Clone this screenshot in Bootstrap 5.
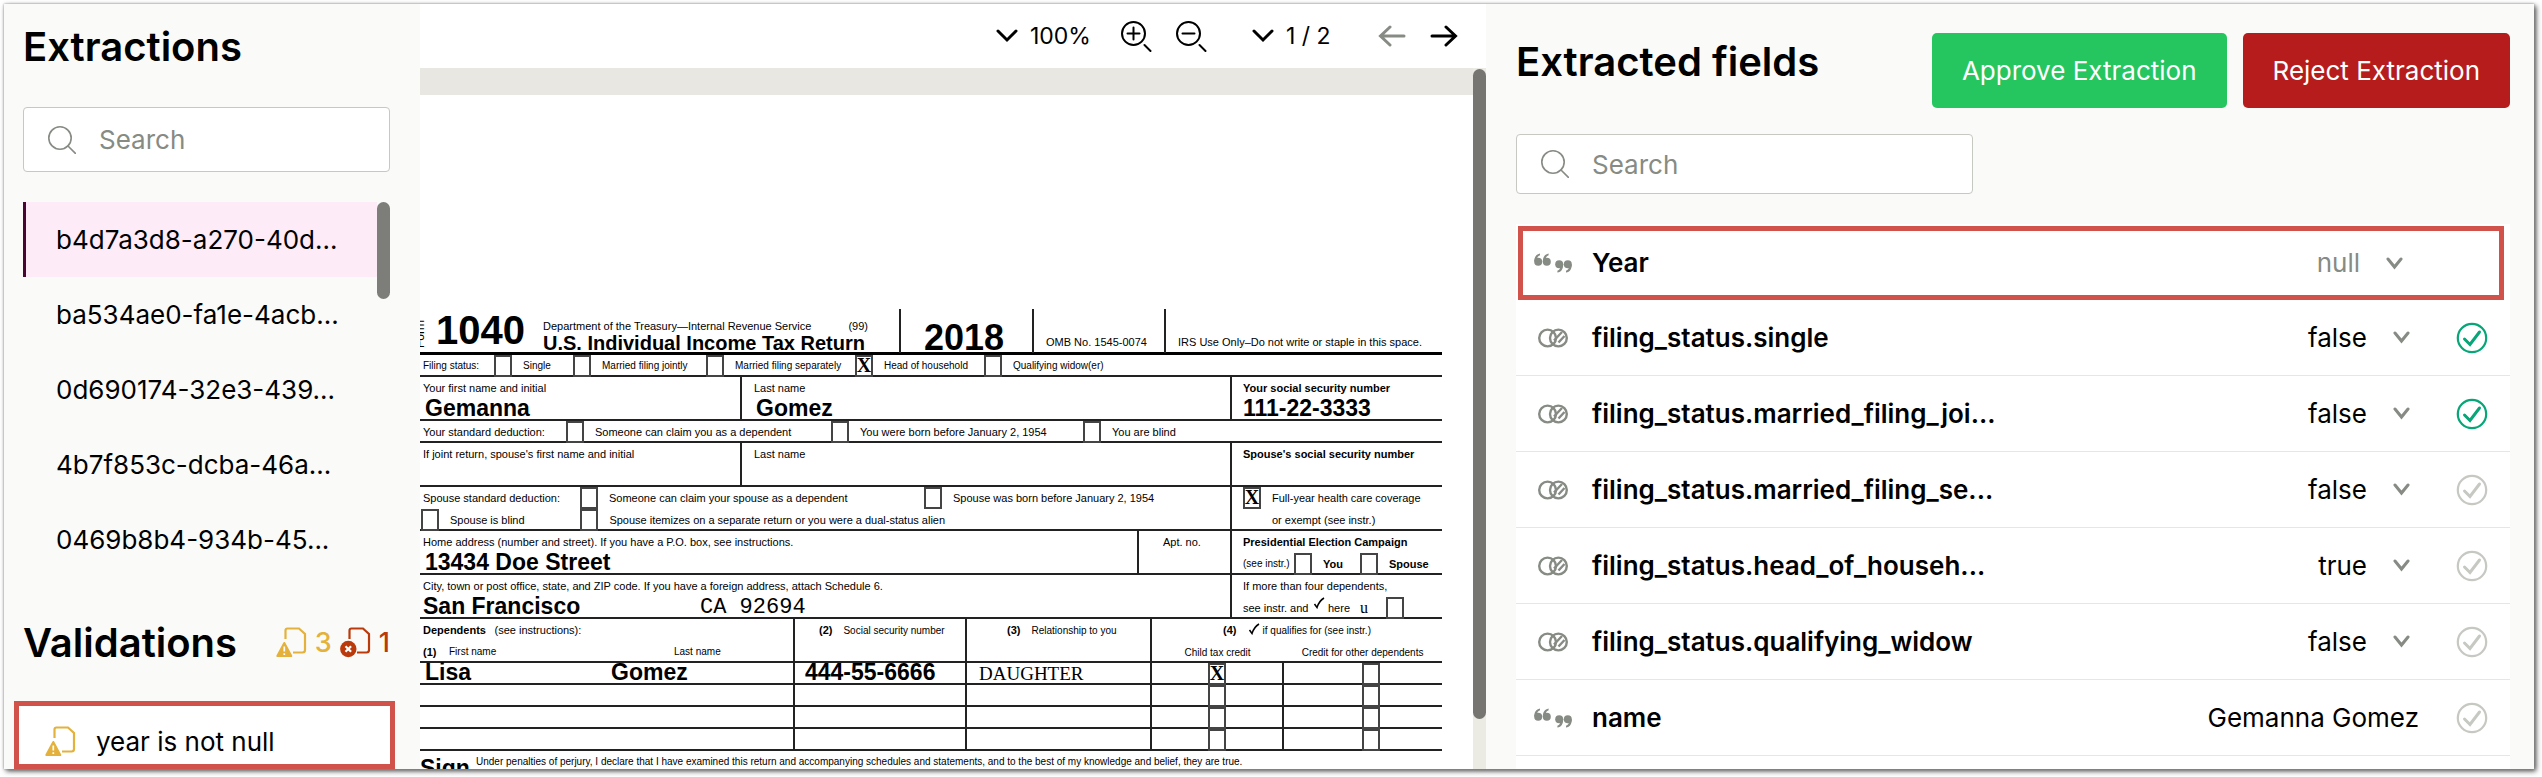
<!DOCTYPE html>
<html lang="en">
<head>
<meta charset="utf-8">
<meta name="viewport" content="width=device-width, initial-scale=1">
<title>Extraction review</title>
<link href="https://cdn.jsdelivr.net/npm/bootstrap@5.3.0/dist/css/bootstrap.min.css" rel="stylesheet">
<script src="https://cdn.jsdelivr.net/npm/bootstrap@5.3.0/dist/js/bootstrap.bundle.min.js" defer></script>
<style>
  body { font-family: Inter, sans-serif; font-size: 26px; color: #000; background: #fefefe; height: 100vh; padding: 4px 8px 8px 4px; overflow: hidden; }
  .app { height: 100%; background: #fafaf8; box-shadow: 0 0 2px #999, 2px 2px 5px rgba(0,0,0,.75); }
  .app > * { min-width: 0; overflow: hidden; }
  h1, h2 { font-size: 40px; line-height: 48px; font-weight: 600; margin: 0; }

  /* side panel */
  .side { flex: 0 0 416px; padding: 19px 30px 0 19px; }
  .searchbox { background: #fff; border: 1px solid #c6c8c2; border-radius: 4px; padding: 0 24px; gap: 23px; color: #868b83; }
  .searchbox input { border: 0; outline: 0; background: none; min-width: 0; flex: 1; padding: 0; color: #000; }
  .searchbox input::placeholder { color: #868b83; opacity: 1; }
  .side .searchbox { height: 65px; margin-top: 36px; }
  .doc-list { margin-top: 30px; }
  .doc-list .list-group-item { height: 75px; padding: 0 0 0 30px; border: 0; border-left: 3px solid transparent; border-radius: 0; background: none; color: #000; line-height: 76px; white-space: nowrap; }
  .doc-list .list-group-item.active { background: #fdebf7; border-left-color: #4b0532; margin: 0; }
  .thumb { width: 13px; border-radius: 7px; background: #7d7d7a; }
  .doc-list .thumb { height: 97px; }
  .val-head { margin-top: 42px; }
  .counts { font-weight: 500; font-size: 27px; line-height: 32px; gap: 8px; }
  .warn { color: #e3b13c; } .err { color: #bb3a0b; }
  .marked { border: 5px solid #d0524b; background: #fff; }
  .val-item { margin: 34px -5px 0 -9px; height: 68px; padding: 12px 26px 0; gap: 20px; }

  /* viewer */
  .viewer { flex: 1066 1 0; background: #fff; }
  .tools { height: 64px; padding-right: 28px; }
  .tools select { appearance: none; border: 0; color: #000; background: no-repeat left 1px center url("data:image/svg+xml,%3Csvg xmlns='http://www.w3.org/2000/svg' width='22' height='14'%3E%3Cpath d='M2 2l9 9 9-9' fill='none' stroke='%23000' stroke-width='3' stroke-linecap='round'/%3E%3C/svg%3E"); padding: 0 0 0 35px; font-size: 23px; line-height: 32px; }
  .zoom-sel { width: 96px; margin-right: 30px; } .page-sel { width: 83px; margin: 0 44px; }
  .tools button, .check-btn { border: 0; background: none; padding: 0; display: flex; color: #000; }
  .tools button:disabled { color: #868b83; }
  .stage { background: #ebebe4; min-height: 0; overflow: hidden; }
  .band { height: 27px; background: #e8e7e1; }
  .stage .thumb { height: 650px; margin-top: 1px; background: #767571; }

  /* tax form, on a 22px line grid */
  .sheet { background: #fff; height: 760px; padding: 214px 31px 0 0; font: 11px/22px "Liberation Sans", sans-serif; white-space: nowrap; overflow: hidden; }
  .frow { display: grid; height: 44px; border-bottom: 2px solid #222; padding-left: 3px; }
  .frow.one { height: 22px; }
  .frow > * { min-width: 0; }
  .vl { border-left: 2px solid #222; padding-left: 12px; }
  .vp { padding-left: 11px; }
  .xs { font-size: 10px; }
  .sb { font-weight: 700; font-size: 11px; }
  .big { font-weight: 700; font-size: 23px; line-height: 18px; padding-left: 2px; }
  .vl.big { padding-left: 10px; }
  .tick { display: flex; gap: 11px; height: 22px; }
  .tick input, .box { appearance: none; flex: none; width: 18px; height: 22px; margin: 0; border: 2px solid #444; text-align: center; display: block; }
  .tick input:checked::before, .box:checked::before { content: "X"; display: block; font: 700 20px/17px "Liberation Serif", serif; margin: 0 -2px; color: #000; }
  .mono { font: 22px/22px "Liberation Mono", monospace; }
  .slab { font: 19px/22px "Liberation Serif", serif; }
  .r-head { grid-template-columns: 18fr 101fr 360fr 133fr 132fr 278fr; height: 46px; border-bottom: 3px solid #000; padding-left: 0; }
  .formword { writing-mode: vertical-rl; transform: rotate(180deg); line-height: 12px; width: 12px; margin: 13px 0 0 -6px; font-size: 12px; height: 26px; }
  .n1040 { font-size: 40px; line-height: 42px; font-weight: 700; margin-left: -2px; }
  .year { font-size: 36px; line-height: 28px; font-weight: 700; padding: 15px 0 0 23px; }
  .irs { line-height: 18px; padding-top: 24px; }
  .ttl { font-size: 20px; line-height: 20px; font-weight: 700; }
  .dept { line-height: 13px; padding: 11px 31px 0 0; }
  .r-status { grid-template-columns: 71fr 79fr 133fr 149fr 129fr 458fr; }
  .r-name { grid-template-columns: 317fr 490fr 212fr; }
  .r-ded { grid-template-columns: 143fr 265fr 252fr 359fr; }
  .r-spouse { grid-template-columns: 807fr 212fr; }
  .g-s1 { display: grid; grid-template-columns: 157fr 344fr 306fr; }
  .g-s2 { display: grid; grid-template-columns: 159fr 648fr; margin-left: -2px; }
  .r-addr { grid-template-columns: 714fr 93fr 212fr; }
  .r-city { grid-template-columns: 807fr 212fr; }
  .r-dep { grid-template-columns: 370fr 172fr 185fr 292fr; }
  .r-line { grid-template-columns: 370fr 172fr 185fr 132fr 160fr; }
  .halves { display: grid; grid-template-columns: 132fr 160fr; }
  .g-n { display: grid; grid-template-columns: 186fr 184fr; }
  .g-h { display: grid; grid-template-columns: 26fr 225fr 119fr; }
  .g-c { display: grid; grid-template-columns: 277fr 530fr; }
  .pair { display: grid; grid-template-columns: 51fr 66fr 82fr; }
  .more { display: grid; grid-template-columns: 70fr 15fr 32fr 26fr 56fr; }
  .sign { display: grid; grid-template-columns: 56fr 966fr; }

  /* fields */
  .fields { flex: 994 1 0; padding: 29px 24px 0 30px; }
  .fields h2 { margin-top: 5px; }
  .btn-act { height: 75px; padding: 0 30px; border: 0; border-radius: 5px; color: #fff; white-space: nowrap; }
  .ok-bg { background: #25c660; } .no-bg { background: #b71c1c; }
  .fields .searchbox { width: 46%; height: 60px; margin-top: 26px; }
  .flist { margin: 30px 0 0; background: #fff; }
  .flist > li { height: 76px; border-bottom: 1px solid #e6e6e3; display: flex; align-items: center; padding: 0 22px 0 18px; }
  .flist > li.marked { border: 5px solid #d0524b; height: 74px; margin: 0 6px 0 2px; padding: 0 11px; }
  .flist > .pad { height: 2px; border: 0; }
  .kind { flex: 0 0 58px; color: #868b83; }
  .fname { font-weight: 600; line-height: 36px; flex: 1; }
  .flist select { appearance: none; border: 0; color: #000; text-align-last: right; line-height: 36px; width: 160px; padding: 0 43px 0 0; background: no-repeat right center url("data:image/svg+xml,%3Csvg xmlns='http://www.w3.org/2000/svg' width='17' height='13'%3E%3Cpath d='M2 2l6.5 8L15 2' fill='none' stroke='%23868b83' stroke-width='3' stroke-linecap='round'/%3E%3C/svg%3E"); }
  .flist select.nul { color: #868b83; margin-right: 85px; }
  .check-btn { margin-left: 46px; color: #c6c8c2; }
  .check-btn.on { color: #07a577; }
  .fval { margin-right: -9px; }
</style>
</head>
<body>
<svg width="0" height="0" class="position-absolute" aria-hidden="true">
  <defs>
    <symbol id="i-search" viewBox="0 0 28 28"><g fill="none" stroke="currentColor" stroke-width="1.6" stroke-linecap="round"><circle cx="12" cy="12" r="11.2"/><path d="M20 20l7.400 7.400"/></g></symbol>
    <symbol id="i-page" viewBox="0 0 31 31"><path d="M9.500 12V3.500q0-2 2-2H23l6 5.500v16q0 2.500-2.500 2.500H17" fill="none" stroke="currentColor" stroke-width="2.200"/></symbol>
    <symbol id="i-warn" viewBox="0 0 31 31"><use href="#i-page"/><path d="M8.300 16l7 13H1.300z" fill="currentColor" stroke="currentColor" stroke-width="2" stroke-linejoin="round"/><path d="M8.300 19.500v5M8.300 26.300v1.700" stroke="#fff" stroke-width="1.700"/></symbol>
    <symbol id="i-err" viewBox="0 0 31 31"><use href="#i-page"/><circle cx="8.300" cy="22" r="8.200" fill="currentColor"/><path d="M5.500 19.200l5.600 5.600M11.100 19.200l-5.600 5.600" stroke="#fff" stroke-width="2.200"/></symbol>
    <symbol id="i-rings" viewBox="0 0 30 20"><g fill="none" stroke="currentColor" stroke-width="2.400"><circle cx="9.600" cy="10" r="8.400"/><circle cx="20.400" cy="10" r="8.400"/><path d="M16 12.500l8-8.500M20.500 14.500l6-6.500"/></g></symbol>
    <symbol id="i-quote" viewBox="0 0 38 20"><g fill="currentColor"><g id="qm"><circle cx="4.200" cy="8.800" r="4"/><path d="M.2 8.800C.2 4 2 1.200 6 .4v1.800C3.800 3 3 4.500 3 7z"/></g><use href="#qm" x="8.600"/><g transform="rotate(180 19 10)"><use href="#qm"/><use href="#qm" x="8.600"/></g></g></symbol>
    <symbol id="i-check" viewBox="0 0 32 32"><g fill="none" stroke="currentColor"><circle cx="16" cy="16" r="14.200" stroke-width="2.200"/><path d="M8.500 17l5.500 5.500L23.500 10" stroke-width="3" stroke-linecap="round"/></g></symbol>
    <symbol id="i-tick" viewBox="0 0 12 12"><path d="M1.500 7L4 10.500Q6 4 11 1" fill="none" stroke="#000" stroke-width="1.500"/></symbol>
  </defs>
</svg>

<div class="app d-flex">
  <aside class="side">
    <h1>Extractions</h1>
    <label class="searchbox d-flex align-items-center"><svg width="28" height="28"><use href="#i-search"/></svg><input type="text" placeholder="Search" aria-label="Search extractions"></label>
    <div class="doc-list d-flex">
      <div class="list-group flex-grow-1">
        <a href="#" class="list-group-item active">b4d7a3d8-a270-40d...</a>
        <a href="#" class="list-group-item">ba534ae0-fa1e-4acb...</a>
        <a href="#" class="list-group-item">0d690174-32e3-439...</a>
        <a href="#" class="list-group-item">4b7f853c-dcba-46a...</a>
        <a href="#" class="list-group-item">0469b8b4-934b-45...</a>
      </div>
      <div class="thumb"></div>
    </div>
    <div class="val-head d-flex align-items-center justify-content-between">
      <h2>Validations</h2>
      <div class="counts d-flex">
        <span class="warn d-flex gap-2"><svg width="31" height="31"><use href="#i-warn"/></svg>3</span>
        <span class="err d-flex gap-2"><svg width="31" height="31"><use href="#i-err"/></svg>1</span>
      </div>
    </div>
    <div class="val-item marked d-flex align-items-center"><svg class="warn" width="31" height="31"><use href="#i-warn"/></svg><span>year is not null</span></div>
  </aside>

  <main class="viewer d-flex flex-column">
    <div class="tools d-flex align-items-center justify-content-end flex-shrink-0">
      <select class="zoom-sel" aria-label="Zoom"><option>100%</option></select>
      <button type="button" aria-label="Zoom in"><svg width="31" height="31" viewBox="0 0 31 31" fill="none" stroke="currentColor" stroke-width="2" stroke-linecap="round"><circle cx="12.500" cy="12.500" r="11.500"/><path d="M12.500 6.500v12M6.500 12.500h12M23.500 24l6 6"/></svg></button>
      <button type="button" aria-label="Zoom out" class="ms-4"><svg width="31" height="31" viewBox="0 0 31 31" fill="none" stroke="currentColor" stroke-width="2" stroke-linecap="round"><circle cx="12.500" cy="12.500" r="11.500"/><path d="M6.500 12.500h12M23.500 24l6 6"/></svg></button>
      <select class="page-sel" aria-label="Page"><option>1 / 2</option></select>
      <button type="button" aria-label="Previous page" class="me-4" disabled><svg width="28" height="22" viewBox="0 0 28 22" fill="none" stroke="currentColor" stroke-width="3" stroke-linecap="round"><path d="M26 11H3M12 2L2.500 11l9.500 9"/></svg></button>
      <button type="button" aria-label="Next page"><svg width="28" height="22" viewBox="0 0 28 22" fill="none" stroke="currentColor" stroke-width="3" stroke-linecap="round"><path d="M2 11h23M16 2l9.500 9-9.500 9"/></svg></button>
    </div>
    <div class="stage d-flex flex-grow-1">
      <div class="flex-grow-1">
        <div class="band"></div>
        <div class="sheet">
          <div class="frow r-head">
            <div class="formword">Form</div>
            <div class="n1040">1040</div>
            <div class="ps-1"><div class="dept d-flex justify-content-between"><span>Department of the Treasury—Internal Revenue Service</span><span>(99)</span></div><div class="ttl">U.S. Individual Income Tax Return</div></div>
            <div class="vl year">2018</div>
            <div class="vl irs">OMB No. 1545-0074</div>
            <div class="vl irs">IRS Use Only–Do not write or staple in this space.</div>
          </div>
          <div class="frow one r-status xs">
            <div>Filing status:</div>
            <label class="tick"><input type="checkbox">Single</label>
            <label class="tick"><input type="checkbox">Married filing jointly</label>
            <label class="tick"><input type="checkbox">Married filing separately</label>
            <label class="tick"><input type="checkbox" checked>Head of household</label>
            <label class="tick"><input type="checkbox">Qualifying widow(er)</label>
          </div>
          <div class="frow r-name">
            <div>Your first name and initial<div class="big">Gemanna</div></div>
            <div class="vl">Last name<div class="big">Gomez</div></div>
            <div class="vl vp"><div class="sb">Your social security number</div><div class="big ps-0">111-22-3333</div></div>
          </div>
          <div class="frow one r-ded">
            <div>Your standard deduction:</div>
            <label class="tick"><input type="checkbox">Someone can claim you as a dependent</label>
            <label class="tick"><input type="checkbox">You were born before January 2, 1954</label>
            <label class="tick"><input type="checkbox">You are blind</label>
          </div>
          <div class="frow r-name">
            <div>If joint return, spouse's first name and initial</div>
            <div class="vl">Last name</div>
            <div class="vl vp sb">Spouse's social security number</div>
          </div>
          <div class="frow r-spouse">
            <div>
              <div class="g-s1"><span>Spouse standard deduction:</span><label class="tick"><input type="checkbox">Someone can claim your spouse as a dependent</label><label class="tick"><input type="checkbox">Spouse was born before January 2, 1954</label></div>
              <div class="g-s2"><label class="tick"><input type="checkbox">Spouse is blind</label><label class="tick"><input type="checkbox">Spouse itemizes on a separate return or you were a dual-status alien</label></div>
            </div>
            <div class="vl vp"><label class="tick"><input type="checkbox" checked><span>Full-year health care coverage<br>or exempt (see instr.)</span></label></div>
          </div>
          <div class="frow r-addr">
            <div>Home address (number and street). If you have a P.O. box, see instructions.<div class="big">13434 Doe Street</div></div>
            <div class="vl ps-4">Apt. no.</div>
            <div class="vl vp"><b>Presidential Election Campaign</b>
              <div class="pair"><span class="xs">(see instr.)</span><label class="tick sb"><input type="checkbox">You</label><label class="tick sb"><input type="checkbox">Spouse</label></div></div>
          </div>
          <div class="frow r-city">
            <div>City, town or post office, state, and ZIP code. If you have a foreign address, attach Schedule 6.<div class="g-c"><span class="big ps-0">San Francisco</span><span class="mono">CA 92694</span></div></div>
            <div class="vl vp">If more than four dependents,
              <div class="more"><span>see instr. and</span><svg width="12" height="18"><use href="#i-tick" width="12" height="12"/></svg><span>here</span><span class="slab fs-6">u</span><input class="box" type="checkbox" aria-label="More than four dependents"></div></div>
          </div>
          <div class="frow r-dep">
            <div><span class="sb">Dependents</span>&ensp; <span>(see instructions):</span><div class="g-h"><span class="sb">(1)</span><span class="xs">First name</span><span class="xs">Last name</span></div></div>
            <div class="vl ps-4"><span class="sb">(2)</span>&emsp;<span class="xs">Social security number</span></div>
            <div class="vl ps-4"><span class="sb ms-3 me-2">(3)</span> <span class="xs">Relationship to you</span></div>
            <div class="vl p-0"><div class="text-center"><span class="sb me-2">(4)</span> <svg width="12" height="12" class="mb-1"><use href="#i-tick"/></svg> <span class="xs">if qualifies for (see instr.)</span></div>
              <div class="halves xs text-center"><span>Child tax credit</span><span>Credit for other dependents</span></div></div>
          </div>
          <div class="frow one r-line">
            <div class="g-n"><span class="big">Lisa</span><span class="big">Gomez</span></div>
            <div class="vl big">444-55-6666</div>
            <div class="vl slab">DAUGHTER</div>
            <div class="vl ps-0"><input class="box mx-auto" type="checkbox" checked aria-label="Child tax credit"></div>
            <div class="vl ps-3"><input class="box mx-auto" type="checkbox" aria-label="Other credit"></div>
          </div>
          <div class="frow one r-line"><div></div><div class="vl"></div><div class="vl"></div><div class="vl ps-0"><input class="box mx-auto" type="checkbox" aria-label="Child tax credit"></div><div class="vl ps-3"><input class="box mx-auto" type="checkbox" aria-label="Other credit"></div></div>
          <div class="frow one r-line"><div></div><div class="vl"></div><div class="vl"></div><div class="vl ps-0"><input class="box mx-auto" type="checkbox" aria-label="Child tax credit"></div><div class="vl ps-3"><input class="box mx-auto" type="checkbox" aria-label="Other credit"></div></div>
          <div class="frow one r-line"><div></div><div class="vl"></div><div class="vl"></div><div class="vl ps-0"><input class="box mx-auto" type="checkbox" aria-label="Child tax credit"></div><div class="vl ps-3"><input class="box mx-auto" type="checkbox" aria-label="Other credit"></div></div>
          <div class="sign"><span class="big ps-0 pt-2">Sign</span><span class="xs">Under penalties of perjury, I declare that I have examined this return and accompanying schedules and statements, and to the best of my knowledge and belief, they are true.</span></div>
        </div>
      </div>
      <div class="thumb flex-shrink-0"></div>
    </div>
  </main>

  <section class="fields">
    <div class="d-flex align-items-start">
      <h2 class="me-auto">Extracted fields</h2>
      <button type="button" class="btn-act ok-bg">Approve Extraction</button>
      <button type="button" class="btn-act no-bg ms-3">Reject Extraction</button>
    </div>
    <label class="searchbox d-flex align-items-center"><svg width="28" height="28"><use href="#i-search"/></svg><input type="text" placeholder="Search" aria-label="Search fields"></label>
    <ul class="flist list-unstyled">
      <li class="pad"></li>
      <li class="marked"><span class="kind"><svg width="38" height="20" class="d-block"><use href="#i-quote"/></svg></span><span class="fname">Year</span><select class="nul" aria-label="Year"><option>null</option></select></li>
      <li><span class="kind ps-1"><svg width="30" height="20" class="d-block"><use href="#i-rings"/></svg></span><span class="fname">filing_status.single</span><select aria-label="filing_status.single"><option>false</option><option>true</option></select><button type="button" class="check-btn on" aria-label="Approved"><svg width="32" height="32"><use href="#i-check"/></svg></button></li>
      <li><span class="kind ps-1"><svg width="30" height="20" class="d-block"><use href="#i-rings"/></svg></span><span class="fname">filing_status.married_filing_joi...</span><select aria-label="filing_status.married_filing_jointly"><option>false</option><option>true</option></select><button type="button" class="check-btn on" aria-label="Approved"><svg width="32" height="32"><use href="#i-check"/></svg></button></li>
      <li><span class="kind ps-1"><svg width="30" height="20" class="d-block"><use href="#i-rings"/></svg></span><span class="fname">filing_status.married_filing_se...</span><select aria-label="filing_status.married_filing_separately"><option>false</option><option>true</option></select><button type="button" class="check-btn" aria-label="Approve"><svg width="32" height="32"><use href="#i-check"/></svg></button></li>
      <li><span class="kind ps-1"><svg width="30" height="20" class="d-block"><use href="#i-rings"/></svg></span><span class="fname">filing_status.head_of_househ...</span><select aria-label="filing_status.head_of_household"><option>true</option><option>false</option></select><button type="button" class="check-btn" aria-label="Approve"><svg width="32" height="32"><use href="#i-check"/></svg></button></li>
      <li><span class="kind ps-1"><svg width="30" height="20" class="d-block"><use href="#i-rings"/></svg></span><span class="fname">filing_status.qualifying_widow</span><select aria-label="filing_status.qualifying_widow"><option>false</option><option>true</option></select><button type="button" class="check-btn" aria-label="Approve"><svg width="32" height="32"><use href="#i-check"/></svg></button></li>
      <li><span class="kind"><svg width="38" height="20" class="d-block"><use href="#i-quote"/></svg></span><span class="fname">name</span><span class="fval">Gemanna Gomez</span><button type="button" class="check-btn" aria-label="Approve"><svg width="32" height="32"><use href="#i-check"/></svg></button></li>
      <li></li>
    </ul>
  </section>
</div>
</body>
</html>
